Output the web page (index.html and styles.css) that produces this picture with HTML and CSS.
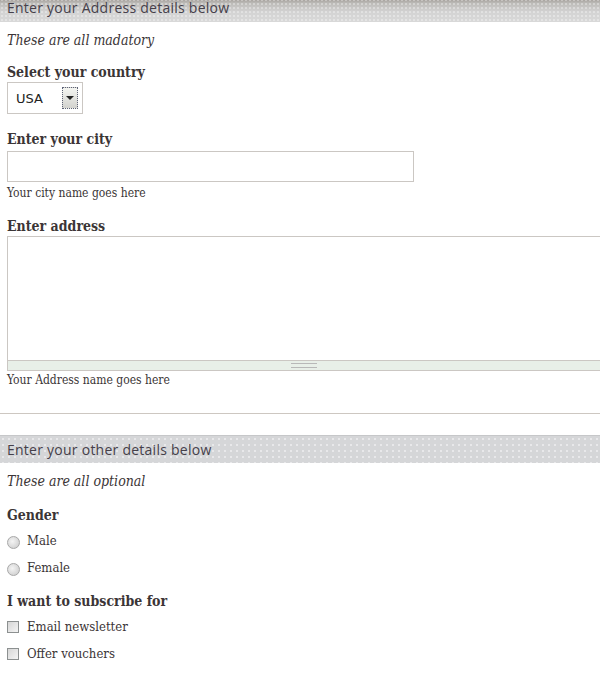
FILE: index.html
```html
<!DOCTYPE html>
<html>
<head>
<meta charset="utf-8">
<link rel="stylesheet" href="styles.css">
</head>
<body>
<form class="form">
  <fieldset class="section">
    <div class="bar bar-top">Enter your Address details below</div>
    <p class="note">These are all madatory</p>
    <div class="field field-first">
      <label class="label">Select your country</label>
      <div class="select"><span class="select-value">USA</span><span class="select-btn"><span class="arrow"></span></span></div>
    </div>
    <div class="field">
      <label class="label">Enter your city</label>
      <div class="input"></div>
      <div class="hint">Your city name goes here</div>
    </div>
    <div class="field">
      <label class="label">Enter address</label>
      <div class="textarea"><div class="ta-body"></div><div class="ta-grip"><span class="grip"></span></div></div>
      <div class="hint hint-ta">Your Address name goes here</div>
    </div>
  </fieldset>
  <hr class="rule">
  <fieldset class="section section-2">
    <div class="bar">Enter your other details below</div>
    <p class="note note-2">These are all optional</p>
    <div class="field field-gender">
      <label class="label">Gender</label>
      <div class="opt"><span class="radio"></span>Male</div>
      <div class="opt"><span class="radio"></span>Female</div>
    </div>
    <div class="field field-sub">
      <label class="label">I want to subscribe for</label>
      <div class="opt"><span class="check"></span>Email newsletter</div>
      <div class="opt"><span class="check"></span>Offer vouchers</div>
    </div>
    <div class="field field-last">
      <label class="label">mobile number</label>
    </div>
  </fieldset>
</form>
</body>
</html>
```
FILE: styles.css
```css
html, body { margin: 0; padding: 0; background: #fff; }
body { overflow: hidden; width: 600px; height: 682px; font-family: "DejaVu Serif Condensed", "DejaVu Serif", Georgia, serif; font-stretch: condensed; color: #3b3536; }
.form { margin: 0; }
.section { border: 0; margin: 0; padding: 0; }
.bar {
  height: 27px; line-height: 27px; padding-left: 7px;
  font-family: "Open Sans", "DejaVu Sans", sans-serif; font-stretch: normal; font-size: 14px; letter-spacing: 0.25px; color: #45404a;
  background-color: #d5d6d8;
  background-image: radial-gradient(circle, rgba(255,255,255,0.7) 0.6px, transparent 0.9px);
  background-size: 6px 6px;
  border-top: 1px solid #c6c7c9;
}
.bar-top {
  height: 28px; margin-top: -6px; border-top: 0;
  background-color: #cfcfcf;
  background-image:
    radial-gradient(circle, rgba(255,255,255,0.5) 0.6px, transparent 0.9px),
    linear-gradient(#a8a49f 0, #a8a49f 6px, #bcbab7 9px, #d3d3d3 18px, #d8d8d8 100%);
  background-size: 4px 4px, 100% 100%;
}
.note { margin: 9px 0 0 7px; font-style: italic; font-size: 14px; line-height: 18px; }
.note-2 { margin-top: 9px; }
.field { margin: 16px 0 0 7px; }
.field-first { margin-top: 14px; }
.field-gender { margin-top: 16px; }
.field-sub { margin-top: 15px; }
.field-last { margin-top: 22px; }
.label { display: block; font-weight: bold; font-size: 14px; line-height: 18px; }
.select {
  margin-top: 1px; width: 74px; height: 30px; border: 1px solid #cbc7c3;
  display: flex; align-items: center; justify-content: space-between;
}
.select-value { font-family: "DejaVu Sans", sans-serif; font-stretch: normal; font-size: 13px; margin-left: 8px; color: #222; }
.select-btn {
  width: 14px; height: 20px; margin-right: 4px; border: 1px dotted #5f6478;
  background: linear-gradient(#f4f5f1, #d2d2ce);
  display: flex; align-items: center; justify-content: center;
}
.arrow { width: 0; height: 0; border-left: 4px solid transparent; border-right: 4px solid transparent; border-top: 4px solid #222; }
.input { margin-top: 3px; width: 405px; height: 29px; border: 1px solid #cbc7c3; }
.hint { font-size: 12px; line-height: 16px; margin-top: 3px; }
.hint-ta { margin-top: 1px; }
.textarea { margin-top: 1px; width: 620px; }
.ta-body { height: 123px; border: 1px solid #cbc7c3; }
.ta-grip {
  height: 9px; border: 1px solid #cbc7c3; border-top: 0; background: #e8efe8;
  display: flex; justify-content: center; align-items: center; padding-right: 27px;
}
.grip { width: 26px; height: 3px; border-top: 1px solid #b8b8b8; border-bottom: 1px solid #b8b8b8; }
.rule { margin: 25px 0 0 0; border: 0; border-top: 1px solid #cdc7c1; height: 0; }
.section-2 { margin-top: 21px; }
.opt { display: flex; align-items: center; font-size: 13px; line-height: 18px; margin-top: 9px; }
.label + .opt { margin-top: 8px; }
.radio {
  width: 11px; height: 11px; border-radius: 50%; border: 1px solid #a8a8a8;
  background: radial-gradient(circle at 40% 40%, #f4f4f4, #c8c8c8); margin-right: 7px; margin-top: 2px;
}
.check {
  width: 10px; height: 10px; border: 1px solid #8c9090;
  background: linear-gradient(135deg, #d6d6d6, #f4f4f4); margin-right: 8px;
}
```
